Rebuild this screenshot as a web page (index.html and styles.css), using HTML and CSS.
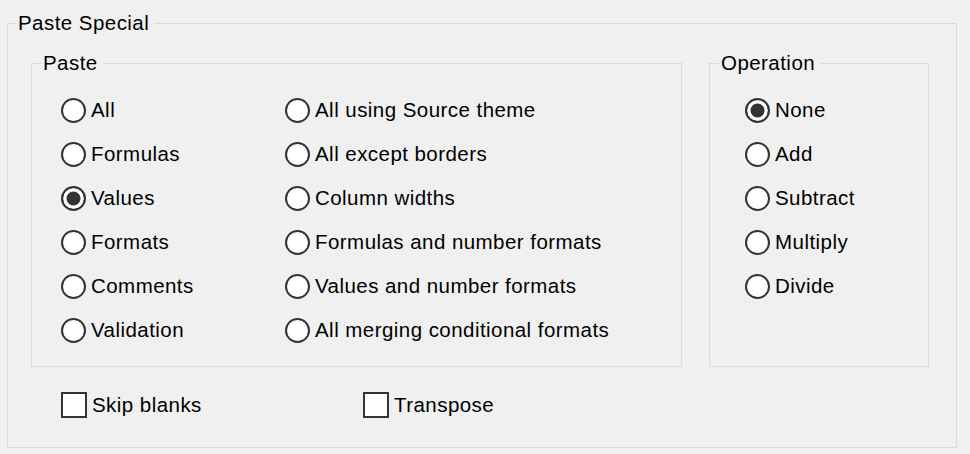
FILE: index.html
```html
<!DOCTYPE html>
<html lang="en">
<head>
<meta charset="utf-8">
<title>Paste Special</title>
<link rel="stylesheet" href="styles.css">
</head>
<body>
<fieldset class="outer">
  <legend class="outer-legend">Paste Special</legend>
  <div class="outer-body">
    <div class="groups">
      <fieldset class="group paste">
        <legend>Paste</legend>
        <div class="paste-grid">
          <label class="opt"><input type="radio" name="paste"><span>All</span></label>
          <label class="opt"><input type="radio" name="paste"><span>All using Source theme</span></label>
          <label class="opt"><input type="radio" name="paste"><span>Formulas</span></label>
          <label class="opt"><input type="radio" name="paste"><span>All except borders</span></label>
          <label class="opt"><input type="radio" name="paste" checked><span>Values</span></label>
          <label class="opt"><input type="radio" name="paste"><span>Column widths</span></label>
          <label class="opt"><input type="radio" name="paste"><span>Formats</span></label>
          <label class="opt"><input type="radio" name="paste"><span>Formulas and number formats</span></label>
          <label class="opt"><input type="radio" name="paste"><span>Comments</span></label>
          <label class="opt"><input type="radio" name="paste"><span>Values and number formats</span></label>
          <label class="opt"><input type="radio" name="paste"><span>Validation</span></label>
          <label class="opt"><input type="radio" name="paste"><span>All merging conditional formats</span></label>
        </div>
      </fieldset>
      <fieldset class="group operation">
        <legend>Operation</legend>
        <div class="op-list">
          <label class="opt"><input type="radio" name="op" checked><span>None</span></label>
          <label class="opt"><input type="radio" name="op"><span>Add</span></label>
          <label class="opt"><input type="radio" name="op"><span>Subtract</span></label>
          <label class="opt"><input type="radio" name="op"><span>Multiply</span></label>
          <label class="opt"><input type="radio" name="op"><span>Divide</span></label>
        </div>
      </fieldset>
    </div>
    <div class="checks">
      <label class="chk skip"><input type="checkbox"><span>Skip blanks</span></label>
      <label class="chk"><input type="checkbox"><span>Transpose</span></label>
    </div>
  </div>
</fieldset>
</body>
</html>
```
FILE: styles.css
```css
html, body {
  margin: 0;
  padding: 0;
  background: #f0f0f0;
}

body {
  padding: 11px 0 0 7px;
  font-family: "Liberation Sans", Arial, sans-serif;
  font-size: 20.5px;
  letter-spacing: 0.45px;
  color: #000;
}

fieldset {
  margin: 0;
  padding: 0;
  min-inline-size: 0;
  border: 1px solid #dadada;
}

legend {
  line-height: 24px;
  padding: 0 5px 0 2px;
  margin-left: 9px;
}

.outer {
  box-sizing: border-box;
  width: 950px;
  padding: 16px 0 29px 0;
}

.outer > .outer-legend {
  margin-left: 8px;
}

.outer-body {
  padding-left: 23px;
}

.groups {
  display: flex;
  gap: 27px;
  align-items: stretch;
}

.group {
  box-sizing: border-box;
  height: 316px;
}

.paste {
  width: 651px;
}

.operation {
  width: 220px;
}

.paste-grid {
  display: grid;
  grid-template-columns: 224px auto;
  grid-auto-rows: 44px;
  padding: 13px 0 0 29px;
}

.op-list {
  display: grid;
  grid-auto-rows: 44px;
  padding: 13px 0 0 35px;
}

.opt, .chk {
  display: flex;
  align-items: center;
  gap: 5px;
  white-space: nowrap;
}

.opt input {
  appearance: none;
  -webkit-appearance: none;
  margin: 0;
  width: 25px;
  height: 25px;
  flex: none;
  box-sizing: border-box;
  border: 2px solid #333;
  border-radius: 50%;
  background: #fff;
}

.opt input:checked {
  background: #333;
  box-shadow: inset 0 0 0 3.5px #fff;
}

.checks {
  display: flex;
  margin-top: 25px;
  padding-left: 30px;
  height: 26px;
}

.chk.skip {
  width: 302px;
}

.chk input {
  appearance: none;
  -webkit-appearance: none;
  margin: 0;
  width: 26px;
  height: 26px;
  flex: none;
  box-sizing: border-box;
  border: 2px solid #333;
  background: #fff;
}
```
